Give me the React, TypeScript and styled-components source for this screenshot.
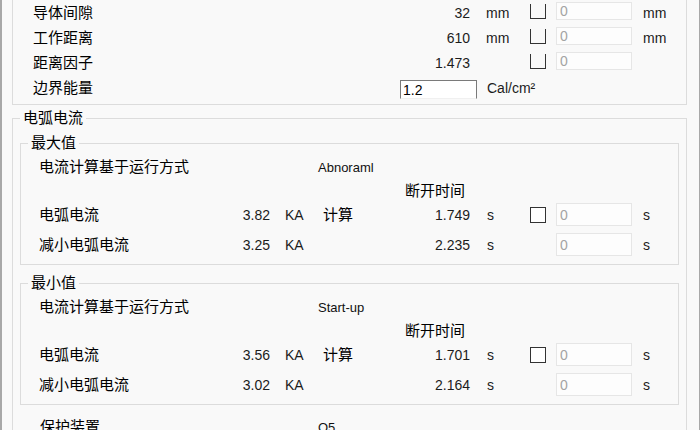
import styled, { createGlobalStyle } from "styled-components";

const GlobalStyle = createGlobalStyle`
    body {
        margin: 0;
        background: #f9f9f9;
        font-family: "Liberation Sans", "Noto Sans CJK SC", sans-serif;
        color: #000;
    }
`

interface RowSpec {
    label: string;
    current: string;
    calc?: boolean;
    time: string;
    check?: boolean;
}

interface SectionProps {
    title: string;
    mode: string;
    rows: RowSpec[];
    gap: number;
}

const Frame = styled.div`
    width: 700px;
    height: 430px;
    box-sizing: border-box;
    overflow: hidden;
    border-left: 2px solid #a8a8a8;
    border-right: 1px solid #a8a8a8;
    padding: 0 12px 0 10px;
    background: #f9f9f9;
`

const TopGroup = styled.div`
    border: 1px solid #dcdcdc;
    border-top: none;
    padding: 0 0 4px 20px;
`

const Group = styled.fieldset<{ $gap: number; $pb: number }>`
    margin: ${p => p.$gap}px 0 0;
    padding: 0 7px ${p => p.$pb}px;
    border: 1px solid #dcdcdc;
    min-width: 0;
`

const Legend = styled.legend`
    padding: 0 3px;
    font-size: 15px;
    line-height: 18px;
`

const ParamRow = styled.div`
    display: grid;
    grid-template-columns: 367px 70px 60px 26px 76px 1fr;
    align-items: center;
    height: 25px;
`

const CurrentRow = styled.div<{ $h: number; $mt?: number }>`
    display: grid;
    grid-template-columns: 191px 40px 53px 77px 70px 60px 26px 76px 1fr;
    align-items: center;
    height: ${p => p.$h}px;
    margin-top: ${p => p.$mt ?? 0}px;
    padding-left: 11px;
`

// label column width reaches to x = 318, where the value text starts
const InfoRow = styled.div<{ $indent: number; $col: number; $h: number; $mt?: number }>`
    display: grid;
    grid-template-columns: ${p => p.$col}px 1fr;
    align-items: center;
    height: ${p => p.$h}px;
    margin-top: ${p => p.$mt ?? 0}px;
    padding-left: ${p => p.$indent}px;
`

const Label = styled.span`
    font-size: 15px;
    line-height: 18px;
    white-space: nowrap;
`

const Heading = styled(Label)`
    grid-column: 5;
    text-align: center;
`

const Mode = styled.span`
    font-size: 13px;
    color: #111;
`

const Num = styled.span`
    font-size: 14px;
    text-align: right;
    color: #1c1c1c;
`

const Unit = styled.span<{ $pad: number }>`
    font-size: 14px;
    padding-left: ${p => p.$pad}px;
    color: #1c1c1c;
    white-space: nowrap;
`

const Check = styled.span<{ $open?: boolean; $top: number }>`
    display: block;
    align-self: start;
    margin-top: ${p => p.$top}px;
    width: 16px;
    height: ${p => (p.$open ? 15 : 16)}px;
    box-sizing: border-box;
    border: 1px solid #333;
    border-top: ${p => (p.$open ? "none" : "1px solid #333")};
    background: ${p => (p.$open ? "transparent" : "#fff")};
`

const Field = styled.input<{ $h: number; $top: number }>`
    align-self: start;
    margin: ${p => p.$top}px 0 0;
    width: 76px;
    height: ${p => p.$h}px;
    box-sizing: border-box;
    border: 1px solid #e6e6e6;
    background: #fdfdfd;
    color: #a4a4a4;
    font: 14px "Liberation Sans", sans-serif;
    padding: 0 3px;
    outline: none;
`

const Energy = styled.div`
    grid-column: 2 / span 3;
    display: flex;
    align-items: center;
    gap: 10px;
`

const EnergyInput = styled.input`
    width: 77px;
    height: 19px;
    margin: 3px 0 0;
    align-self: start;
    box-sizing: border-box;
    border: 1px solid #7a7a7a;
    border-bottom-color: #f0f0f0;
    background: #fff;
    font: 14px "Liberation Sans", sans-serif;
    padding: 1px 2px 0;
    outline: none;
`

const params = [
    { label: "导体间隙", value: "32", unit: "mm" },
    { label: "工作距离", value: "610", unit: "mm" },
    { label: "距离因子", value: "1.473", unit: "" },
]

const maxRows: RowSpec[] = [
    { label: "电弧电流", current: "3.82", calc: true, time: "1.749", check: true },
    { label: "减小电弧电流", current: "3.25", time: "2.235" },
]

const minRows: RowSpec[] = [
    { label: "电弧电流", current: "3.56", calc: true, time: "1.701", check: true },
    { label: "减小电弧电流", current: "3.02", time: "2.164" },
]

function Section({ title, mode, rows, gap }: SectionProps) {
    return (
        <Group $gap={gap} $pb={7}>
            <Legend>{title}</Legend>
            <InfoRow $indent={11} $col={279} $h={30}>
                <Label>电流计算基于运行方式</Label>
                <Mode>{mode}</Mode>
            </InfoRow>
            <CurrentRow $h={16}>
                <Heading>断开时间</Heading>
            </CurrentRow>
            {rows.map((r, i) => (
                <CurrentRow key={r.label} $h={24} $mt={i === 0 ? 5 : 6}>
                    <Label>{r.label}</Label>
                    <Num>{r.current}</Num>
                    <Unit $pad={15}>KA</Unit>
                    <Label>{r.calc ? "计算" : ""}</Label>
                    <Num>{r.time}</Num>
                    <Unit $pad={17}>s</Unit>
                    {r.check ? <Check $top={4} /> : <span />}
                    <Field readOnly value="0" $h={23} $top={0} />
                    <Unit $pad={11}>s</Unit>
                </CurrentRow>
            ))}
        </Group>
    )
}

export default function App() {
    return (
        <Frame>
            <GlobalStyle />
            <TopGroup>
                {params.map(p => (
                    <ParamRow key={p.label}>
                        <Label>{p.label}</Label>
                        <Num>{p.value}</Num>
                        <Unit $pad={16}>{p.unit}</Unit>
                        <Check $open $top={4} />
                        <Field readOnly value="0" $h={18} $top={2} />
                        <Unit $pad={11}>{p.unit}</Unit>
                    </ParamRow>
                ))}
                <ParamRow>
                    <Label>边界能量</Label>
                    <Energy>
                        <EnergyInput defaultValue="1.2" />
                        <Unit $pad={0}>Cal/cm²</Unit>
                    </Energy>
                </ParamRow>
            </TopGroup>
            <Group $gap={4} $pb={0}>
                <Legend>电弧电流</Legend>
                <Section title="最大值" mode="Abnoraml" rows={maxRows} gap={7} />
                <Section title="最小值" mode="Start-up" rows={minRows} gap={9} />
                <InfoRow $indent={20} $col={278} $h={24} $mt={10}>
                    <Label>保护装置</Label>
                    <Mode>Q5</Mode>
                </InfoRow>
            </Group>
        </Frame>
    )
}
